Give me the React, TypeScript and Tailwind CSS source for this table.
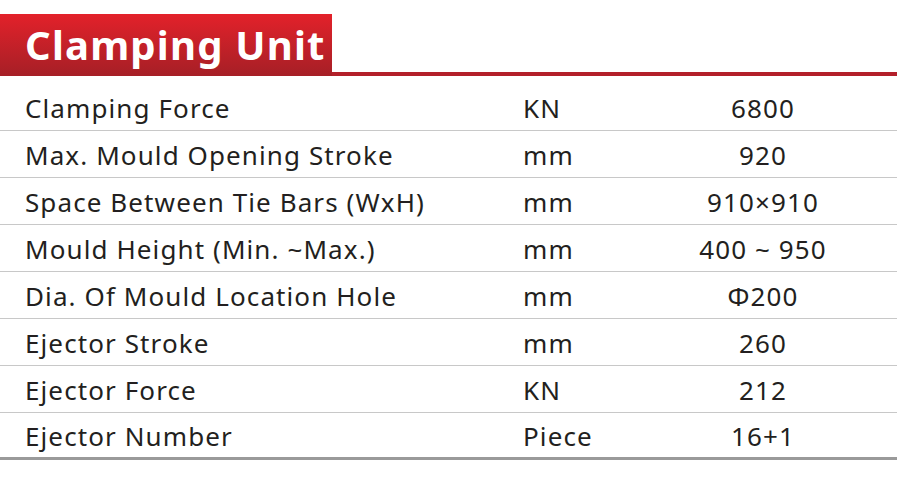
import React from "react";

const rows: [string, string, string][] = [
  ["Clamping Force", "KN", "6800"],
  ["Max. Mould Opening Stroke", "mm", "920"],
  ["Space Between Tie Bars (WxH)", "mm", "910×910"],
  ["Mould Height (Min. ~Max.)", "mm", "400 ~ 950"],
  ["Dia. Of Mould Location Hole", "mm", "Φ200"],
  ["Ejector Stroke", "mm", "260"],
  ["Ejector Force", "KN", "212"],
  ["Ejector Number", "Piece", "16+1"],
];

export default function App() {
  return (
    <div
      className="w-[900px] h-[477px] bg-white overflow-hidden"
      style={{ fontFamily: '"Noto Sans", "Open Sans", sans-serif' }}
    >
      <div className="w-[897px] pt-[14px]">
        <div className="flex items-end">
          <div className="w-[332px] h-[62px] bg-gradient-to-b from-[#e3212a] to-[#a61f26] flex items-center pl-[25px]">
            <span className="text-white font-bold text-[40px] leading-none tracking-[1.2px] mt-[-1px]">
              Clamping Unit
            </span>
          </div>
          <div className="flex-1 h-[4px] bg-[#b3202a]" />
        </div>
        <div className="mt-[8px]">
          {rows.map((r, i) => (
            <div
              key={i}
              className={
                "flex items-center h-[47px] pt-[3px] text-[#231f20] text-[26px] tracking-[1.1px] " +
                (i === rows.length - 1
                  ? "border-b-[3px] border-[#9a9a9a]"
                  : "border-b border-[#c8c8c8]")
              }
            >
              <div className="w-[523px] pl-[25px]">{r[0]}</div>
              <div className="w-[150px]">{r[1]}</div>
              <div className="w-[180px] text-center">{r[2]}</div>
            </div>
          ))}
        </div>
      </div>
    </div>
  );
}
